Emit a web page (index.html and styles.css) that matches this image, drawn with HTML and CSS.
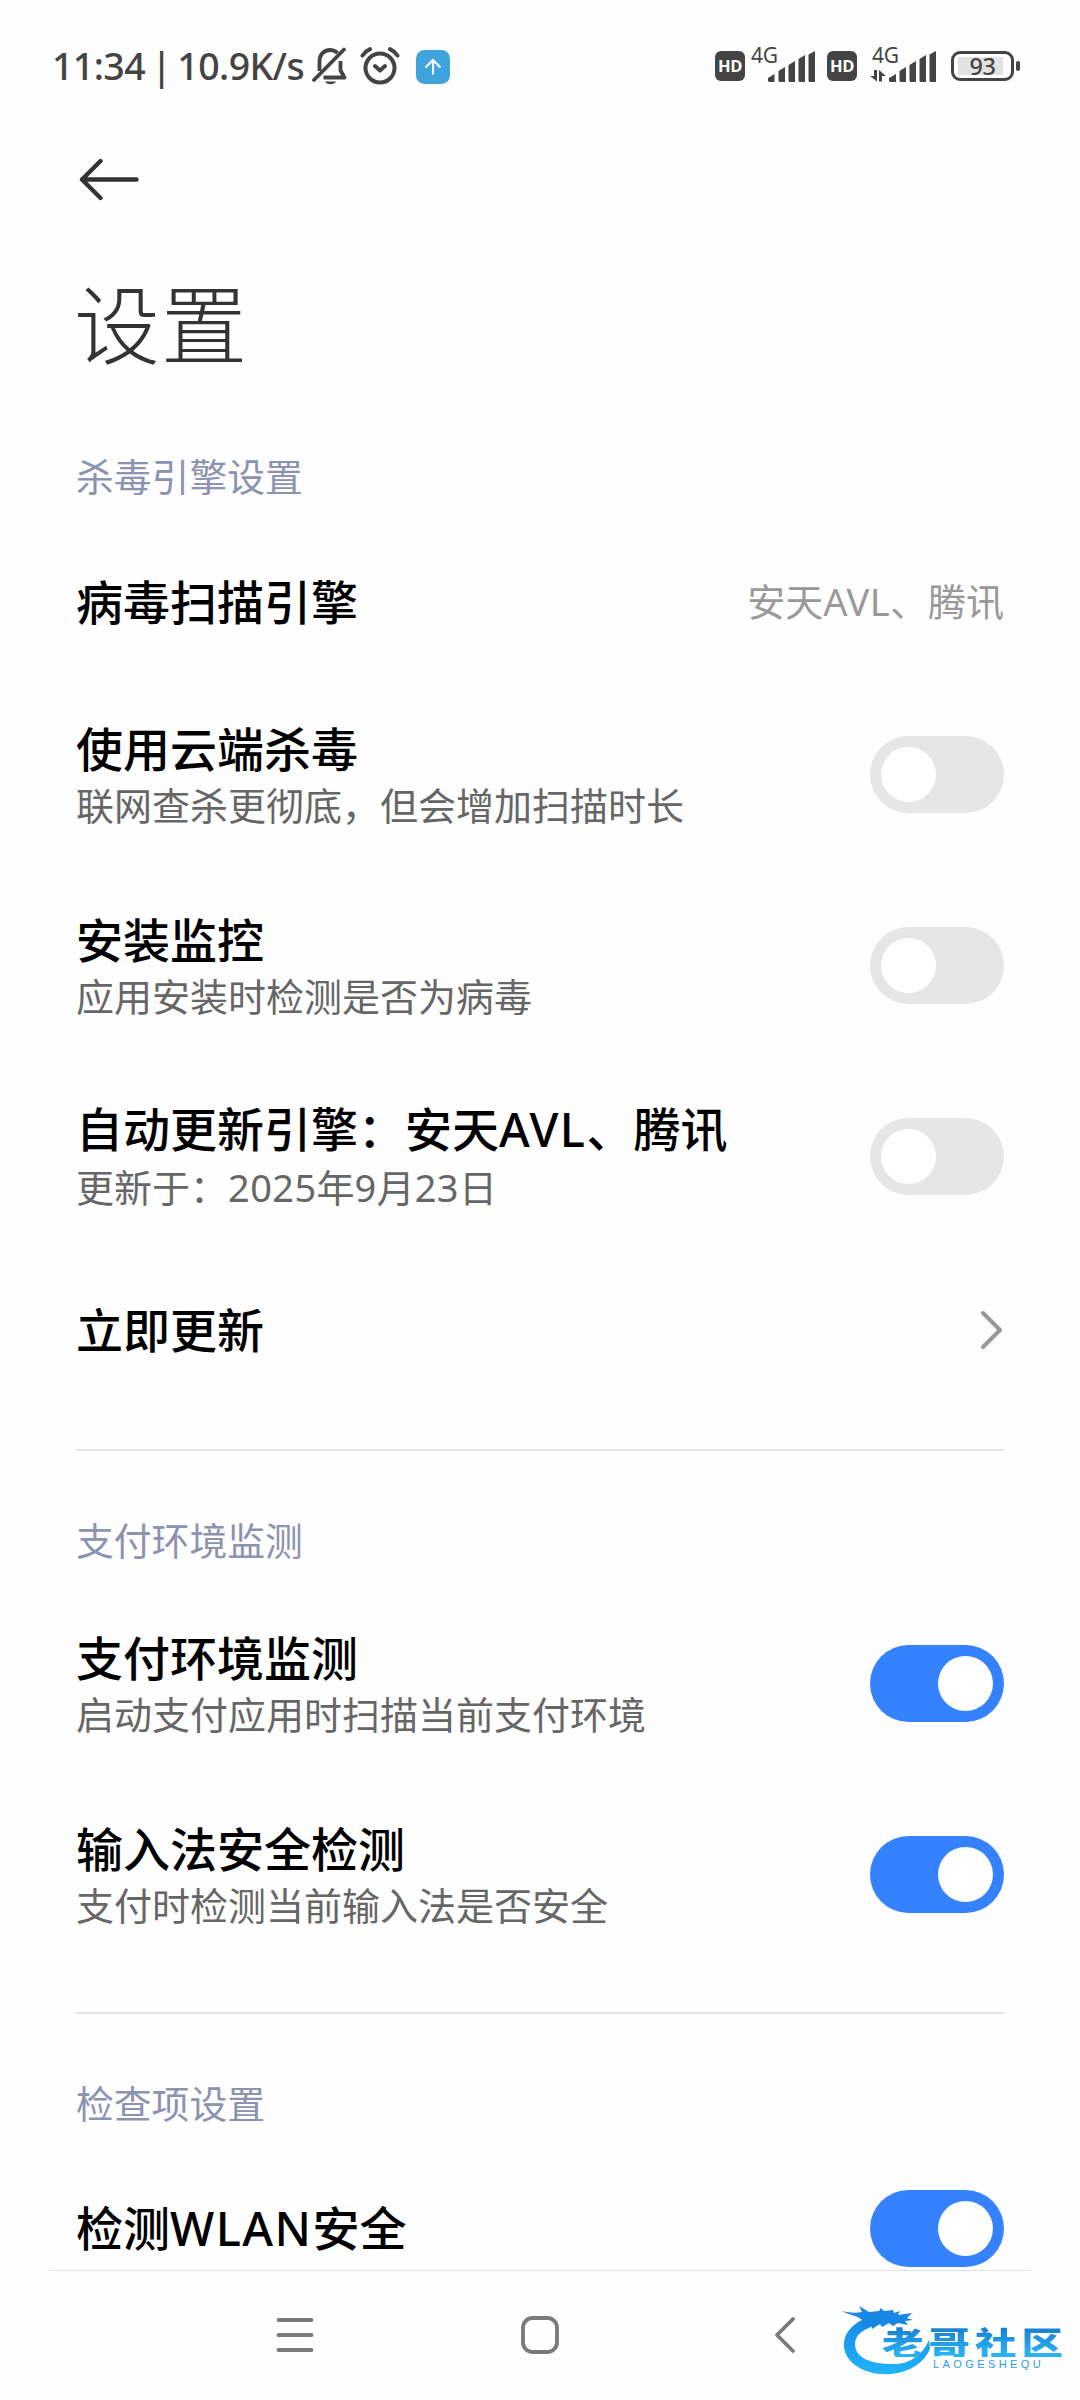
FILE: index.html
```html
<!DOCTYPE html>
<html lang="zh-CN">
<head>
<meta charset="utf-8">
<title>设置</title>
<link rel="stylesheet" href="styles.css">
</head>
<body>
<div class="screen">
  <header class="status">
    <div class="status-left">
      <span class="clock">11:34 | 10.9K/s</span>
      <svg class="bell" width="36" height="38" viewBox="0 0 36 38" fill="none" stroke="#444" stroke-width="3.800">
        <path d="M7.500 24V14.500C7.500 7.500 12 3 18 3c3 0 5.500 1 7.500 3M28.500 14v9.500l4 7H11.500" stroke-linejoin="round"/>
        <path d="M2 33 32 2.500" stroke-linecap="round"/>
        <path d="M13 34.500h11c-1.500 3.500-9.500 3.500-11 0z" fill="#444" stroke="none"/>
      </svg>
      <svg class="alarm" width="40" height="38" viewBox="0 0 40 38" fill="none" stroke="#444" stroke-width="4" stroke-linecap="round" stroke-linejoin="round">
        <circle cx="20" cy="21" r="14.500"/>
        <path d="M2.500 8.500C4.500 5.500 7 3.500 10 2.200M37.500 8.500C35.500 5.500 33 3.500 30 2.200M15 19l5 4.500 5-4.500"/>
      </svg>
      <svg class="upload" width="34" height="34" viewBox="0 0 34 34" fill="none">
        <rect width="34" height="34" rx="8.500" fill="#3fa4db"/>
        <path d="M17 24.500V10.500M9.500 17.500l7.500-7.500 7.500 7.500" stroke="#fff" stroke-width="2"/>
      </svg>
    </div>
    <div class="status-right">
      <span class="hd">HD</span>
      <span class="cell cell-one">
        <span class="net">4G</span>
        <svg width="48" height="32" viewBox="0 0 48 32" fill="#444"><path d="M0 27l6.500-4v8H1.500Q0 31 0 29.500zM10.500 20l6.500-4v15h-5q-1.500 0-1.500-1.500zM20.500 14l6.500-4v21h-5q-1.500 0-1.500-1.500zM30.500 8l6.500-4v27h-5q-1.500 0-1.500-1.500zM40.500 3.500 47 0v31h-5q-1.500 0-1.500-1.500z"/></svg>
      </span>
      <span class="hd">HD</span>
      <span class="cell cell-two">
        <span class="net">4G</span>
        <svg width="67" height="32" viewBox="0 0 67 32" fill="#444"><path d="M4 19h3v11.500L0 25h4zM9 19l7 6h-4v5.500H9zM19 27l7-4v8h-5.500Q19 31 19 29.500zM29.500 20l6.500-4v15h-5q-1.500 0-1.500-1.500zM39.500 14l6.500-4v21h-5q-1.500 0-1.500-1.500zM49.500 8l6.500-4v27h-5q-1.500 0-1.500-1.500zM59.500 3.500 66 0v31h-5q-1.500 0-1.500-1.500z"/></svg>
      </span>
      <span class="battery"><span class="level">93</span></span>
      <span class="battery-tip"></span>
    </div>
  </header>

  <main class="content">
    <svg class="back" width="60" height="44" viewBox="0 0 60 44" fill="none" stroke="#333" stroke-width="4.400" stroke-linecap="round" stroke-linejoin="round">
      <path d="M57.500 22.500H3M21.500 4 3 22.500 21.500 41"/>
    </svg>
    <h1 class="page-title">设置</h1>

    <h2 class="section">杀毒引擎设置</h2>
    <div class="row short"><div class="name">病毒扫描引擎</div><div class="value">安天<span class="latin">AVL</span>、腾讯</div></div>
    <div class="row"><div class="label"><div class="name">使用云端杀毒</div><div class="note">联网查杀更彻底，但会增加扫描时长</div></div><span class="toggle"></span></div>
    <div class="row"><div class="label"><div class="name">安装监控</div><div class="note">应用安装时检测是否为病毒</div></div><span class="toggle"></span></div>
    <div class="row"><div class="label"><div class="name">自动更新引擎：安天<span class="latin">AVL</span>、腾讯</div><div class="note">更新于：<span class="latin">2025</span>年<span class="latin">9</span>月<span class="latin">23</span>日</div></div><span class="toggle"></span></div>
    <div class="row short"><div class="name">立即更新</div>
      <svg class="chevron" width="22" height="40" viewBox="0 0 22 40" fill="none" stroke="#999" stroke-width="4" stroke-linecap="round" stroke-linejoin="round"><path d="M2 3 19 20 2 37"/></svg>
    </div>

    <hr class="rule">
    <h2 class="section">支付环境监测</h2>
    <div class="row"><div class="label"><div class="name">支付环境监测</div><div class="note">启动支付应用时扫描当前支付环境</div></div><span class="toggle on"></span></div>
    <div class="row"><div class="label"><div class="name">输入法安全检测</div><div class="note">支付时检测当前输入法是否安全</div></div><span class="toggle on"></span></div>

    <hr class="rule">
    <h2 class="section">检查项设置</h2>
    <div class="row short"><div class="name">检测<span class="latin">WLAN</span>安全</div><span class="toggle on"></span></div>
  </main>

  <nav class="navbar">
    <svg width="40" height="40" viewBox="0 0 40 40" fill="none" stroke="#7a7a7a" stroke-width="3.800" stroke-linecap="round"><path d="M3.500 5h33M3.500 20h33M3.500 35h33"/></svg>
    <svg width="40" height="40" viewBox="0 0 40 40" fill="none" stroke="#7a7a7a" stroke-width="3.800"><rect x="3" y="3" width="34" height="34" rx="9.500"/></svg>
    <svg width="40" height="40" viewBox="0 0 40 40" fill="none" stroke="#7a7a7a" stroke-width="3.800" stroke-linecap="round" stroke-linejoin="round"><path d="M28 4 12 20l16 16"/></svg>
  </nav>

  <div class="watermark">
    <svg width="100" height="80" viewBox="0 0 100 80">
      <defs><linearGradient id="sea" x1="0" y1="0" x2="0" y2="1"><stop offset="0" stop-color="#1787e3"/><stop offset="1" stop-color="#20b4fa"/></linearGradient></defs>
      <path d="M30 11C10 17 1 29 2 42c2 18 24 29 47 27 19-2 33-11 39-25l-1-9c-7 16-21 25-37 24C27 59 13 52 13 39c0-9 8-15 22-19z" fill="url(#sea)"/>
      <path d="M0 6c8 2 14 2 20 1l-3-6 10 6 10-1 2-3 3 3 9-1 1 3 6-2-2 4 14-2-5 5 6 2-8 1 3 4-10-2-5 3-4-3-7 4-2-3-8 5 0-5-9 4 1-6C17 10 6 10 0 6z" fill="#1787e3"/>
    </svg>
    <div class="brand">老哥社区</div>
    <div class="brand-sub">LAOGESHEQU</div>
  </div>
</div>
</body>
</html>
```
FILE: styles.css
```css
* { box-sizing: border-box; }
body { margin: 0; background: #fefefe; }
.screen {
  position: relative;
  width: 1080px;
  height: 2400px;
  overflow: hidden;
  display: flex;
  flex-direction: column;
  background: #fefefe;
  font-family: "Noto Sans CJK SC", sans-serif;
  color: #000;
}
.latin { font-family: "Noto Sans", sans-serif; letter-spacing: 0.4px; }
.name .latin { letter-spacing: 1.5px; }

.status {
  flex: none;
  height: 132px;
  padding: 0 60px 0 52px;
  display: flex;
  justify-content: space-between;
  align-items: center;
  color: #444;
  font-family: "Noto Sans", sans-serif;
}
.status-left, .status-right { display: flex; align-items: center; white-space: nowrap; }
.clock { font-size: 37.5px; line-height: 44px; font-weight: 500; width: 260px; letter-spacing: -0.6px; word-spacing: -3px; margin-top: -1px; }
.alarm { margin-left: 12px; }
.upload { margin-left: 16px; margin-top: 1px; }
.hd {
  width: 30px;
  height: 30px;
  border-radius: 6px;
  background: #444;
  color: #fff;
  font: 700 16.500px/30px "Open Sans", sans-serif;
  letter-spacing: -0.5px;
  text-align: center;
}
.cell { position: relative; height: 32px; margin-top: 2px; }
.cell svg { display: block; }
.cell-one { padding-left: 23px; margin-right: 11px; }
.cell-two { padding-left: 13px; margin-right: 14px; }
.net { position: absolute; left: 6px; top: -7px; font-size: 21px; line-height: 22px; letter-spacing: -0.3px; }
.cell-two .net { left: 15px; }
.battery {
  width: 63px;
  height: 30px;
  border: 3px solid #444;
  border-radius: 9px;
  padding: 3px 4px;
}
.level { display: block; height: 18px; background: linear-gradient(90deg, #e2e2e2 92%, transparent 92%); text-align: center; font-size: 23.500px; line-height: 19px; font-weight: 500; letter-spacing: -0.5px; }
.battery-tip { width: 4px; height: 10px; margin-left: 2px; border-radius: 2px; background: #444; }

.content { flex: none; height: 2138px; overflow: hidden; padding: 25px 76px 0; }
.back { display: block; margin-left: 3px; }
.page-title { margin: 56px 0 0 -2px; height: 129px; font-size: 86px; line-height: 128px; font-weight: 300; color: #333; letter-spacing: 1px; }
.section { margin: 0; height: 96px; font-size: 37.8px; line-height: 93px; font-weight: 400; color: #8c93b0; }
.page-title + .section { margin-top: 42px; }
.row { height: 191px; display: flex; align-items: center; justify-content: space-between; }
.row.short { height: 155px; }
.name { font-size: 47px; line-height: 58px; font-weight: 500; }
.row.short .name { padding-bottom: 4px; }
.note { font-size: 38px; line-height: 56px; color: #666; }
.value { font-size: 38px; line-height: 56px; padding-bottom: 3px; color: #999; }
.chevron { margin-right: 1px; }
.toggle { width: 134px; height: 77px; padding: 11px; border-radius: 39px; background: #e6e6e6; display: flex; }
.toggle::before { content: ""; width: 55px; height: 55px; border-radius: 50%; background: #fff; }
.toggle.on { background: #3482ff; justify-content: flex-end; }
.rule { margin: 42px 0 41px; height: 2px; border: 0; background: #e4e4e4; }

.navbar {
  flex: none;
  height: 130px;
  margin: 0 50px;
  padding: 0 225px 1px;
  border-top: 1px solid #e2e2e2;
  display: flex;
  justify-content: space-between;
  align-items: center;
}

.watermark { position: absolute; left: 842px; top: 2305px; width: 230px; height: 75px; }
.brand {
  position: absolute;
  left: 40px;
  top: 20px;
  font-size: 32px;
  line-height: 32px;
  font-weight: 900;
  letter-spacing: 3.800px;
  white-space: nowrap;
  transform: scaleX(1.3);
  transform-origin: 0 0;
  background: linear-gradient(#1a80d2 10%, #2ab2f5 90%);
  -webkit-background-clip: text;
  background-clip: text;
  color: transparent;
}
.brand-sub { position: absolute; left: 91px; top: 54px; font: 11px/11px "Liberation Sans", sans-serif; letter-spacing: 3.400px; color: #2c9be8; }
```
